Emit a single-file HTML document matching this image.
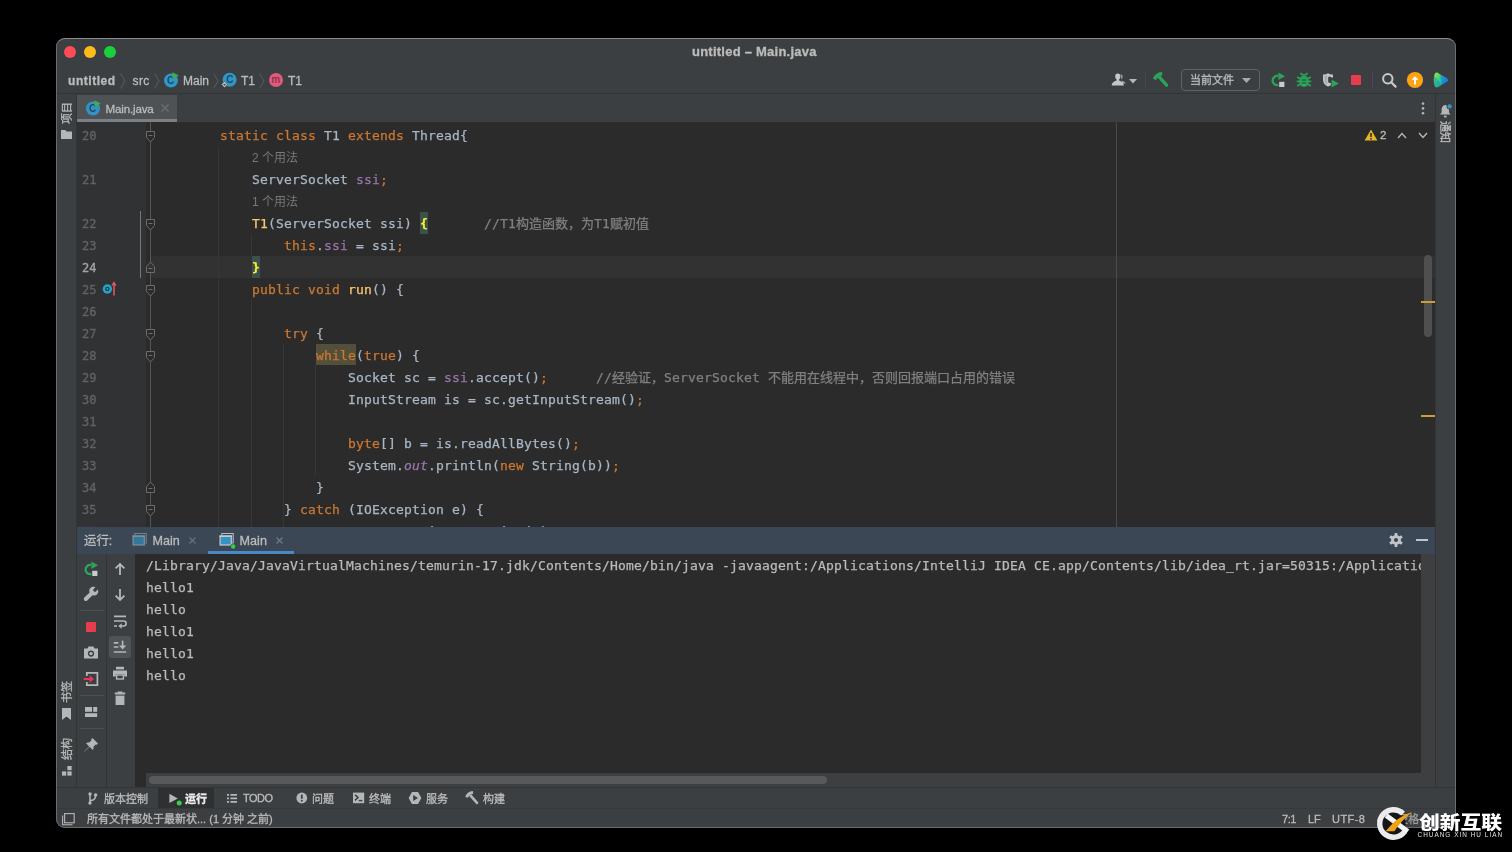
<!DOCTYPE html>
<html lang="zh-CN">
<head>
<meta charset="utf-8">
<title>untitled – Main.java</title>
<style>
html,body{margin:0;padding:0;background:#000;}
body{width:1512px;height:852px;overflow:hidden;position:relative;}
.a{position:absolute;}
#clip{position:absolute;left:56px;top:38px;width:1400px;height:790px;border-radius:9px;overflow:hidden;background:#3c3f41;}
#pg{position:absolute;left:-56px;top:-38px;width:1512px;height:852px;will-change:transform;}
#frame{position:absolute;left:56px;top:38px;width:1398px;height:788px;border-radius:9px;border:1px solid #696c6e;border-top-color:#8a8d8f;pointer-events:none;}
.ui{position:absolute;-webkit-text-stroke:0.3px;font-family:"Liberation Sans","Noto Sans CJK SC",sans-serif;font-size:12px;line-height:16px;color:#bbbbbb;white-space:nowrap;}
.ui11{font-size:11px;}
.b{font-weight:bold;}
.code{position:absolute;left:188px;height:22px;margin-top:1px;-webkit-text-stroke:0.25px;font-family:"DejaVu Sans Mono","Noto Sans CJK SC",monospace;font-size:13px;line-height:22px;letter-spacing:0.173px;color:#a9b7c6;white-space:pre;}
.code .z,.con .z{font-family:"Liberation Sans","Noto Sans CJK SC",sans-serif;letter-spacing:0;line-height:0;}
.k{color:#cc7832;}
.f{color:#9876aa;}
.c{color:#808080;}
.fn{color:#ffc66d;}
.it{font-style:italic;}
.hint{position:absolute;margin-top:1px;font-family:"Liberation Sans","Noto Sans CJK SC",sans-serif;font-size:12px;line-height:22px;height:22px;color:#787878;white-space:nowrap;}
.ln{position:absolute;margin-top:1px;-webkit-text-stroke:0.35px;left:82px;width:20px;height:22px;font-family:"DejaVu Sans Mono",monospace;font-size:12px;line-height:22px;color:#606366;white-space:pre;}
.con{position:absolute;left:146px;height:22px;margin-top:1px;-webkit-text-stroke:0.25px;font-family:"DejaVu Sans Mono","Noto Sans CJK SC",monospace;font-size:13px;line-height:22px;letter-spacing:0.173px;color:#bbbbbb;white-space:pre;}
.vt{position:absolute;-webkit-text-stroke:0.3px;font-family:"Liberation Sans","Noto Sans CJK SC",sans-serif;font-size:11px;line-height:12px;color:#bbbbbb;white-space:nowrap;transform-origin:0 0;}
svg{position:absolute;overflow:visible;}
</style>
</head>
<body>
<div id="clip"><div id="pg">

<!-- ===== title bar ===== -->
<div class="a" style="left:56px;top:38px;width:1400px;height:56px;background:#3c3f41;"></div>
<div class="a" style="left:64px;top:46px;width:12px;height:12px;border-radius:6px;background:#fc4c55;"></div>
<div class="a" style="left:84px;top:46px;width:12px;height:12px;border-radius:6px;background:#fdbc1c;"></div>
<div class="a" style="left:104px;top:46px;width:12px;height:12px;border-radius:6px;background:#1bcf3c;"></div>
<div class="ui b" id="t_title" style="left:692px;top:43.5px;font-size:13px;color:#bcbcbc;letter-spacing:0.24px;">untitled – Main.java</div>

<!-- ===== breadcrumbs ===== -->
<div class="ui b" id="t_bc1" style="left:68px;top:73px;letter-spacing:0.55px;">untitled</div>
<div class="ui" id="t_bc2" style="left:132.5px;top:73px;letter-spacing:0.4px;">src</div>
<div class="ui" id="t_bc3" style="left:183px;top:73px;">Main</div>
<div class="ui" id="t_bc4" style="left:241px;top:73px;">T1</div>
<div class="ui" id="t_bc5" style="left:288px;top:73px;">T1</div>
<svg style="left:119px;top:73px;" width="8" height="16" viewBox="0 0 8 16"><path d="M1.5 0.5 L6 8 L1.5 15.5" fill="none" stroke="#595c5e" stroke-width="1"/></svg>
<svg style="left:153px;top:73px;" width="8" height="16" viewBox="0 0 8 16"><path d="M1.5 0.5 L6 8 L1.5 15.5" fill="none" stroke="#595c5e" stroke-width="1"/></svg>
<svg style="left:212px;top:73px;" width="8" height="16" viewBox="0 0 8 16"><path d="M1.5 0.5 L6 8 L1.5 15.5" fill="none" stroke="#595c5e" stroke-width="1"/></svg>
<svg style="left:258px;top:73px;" width="8" height="16" viewBox="0 0 8 16"><path d="M1.5 0.5 L6 8 L1.5 15.5" fill="none" stroke="#595c5e" stroke-width="1"/></svg>

<!-- class icon (Main) -->
<svg style="left:163px;top:72px;" width="16" height="16" viewBox="0 0 16 16">
 <circle cx="8" cy="8.5" r="7" fill="#3295c4"/>
 <text x="7.6" y="12.1" font-family="Liberation Sans, sans-serif" font-size="10" font-weight="bold" text-anchor="middle" fill="#1b4a66">C</text>
 <path d="M9.5 0.2 L15.8 3.6 L9.5 7 Z" fill="#3fae4e"/>
</svg>
<!-- class icon static (T1) -->
<svg style="left:221px;top:72px;" width="16" height="16" viewBox="0 0 16 16">
 <circle cx="8.6" cy="7.8" r="7" fill="#3295c4"/>
 <text x="8.8" y="11.4" font-family="Liberation Sans, sans-serif" font-size="10" font-weight="bold" text-anchor="middle" fill="#1b4a66">C</text>
 <path d="M3.5 9.2 L6.8 12.5 L3.5 15.8 L0.2 12.5 Z" fill="#3c3f41"/>
 <path d="M3.5 10.4 L5.6 12.5 L3.5 14.6 L1.4 12.5 Z" fill="none" stroke="#b8bcbf" stroke-width="1.2"/>
</svg>
<!-- method icon -->
<svg style="left:268px;top:72px;" width="16" height="16" viewBox="0 0 16 16">
 <circle cx="8" cy="8" r="7" fill="#e05a7b"/>
 <text x="8" y="11" font-family="Liberation Sans, sans-serif" font-size="10" text-anchor="middle" fill="#6b2236">m</text>
</svg>

<!-- ===== top right toolbar ===== -->
<!-- user icon -->
<svg style="left:1111px;top:72px;" width="16" height="16" viewBox="0 0 16 16">
 <path d="M9.6 2.2 C11 2.2 11.6 3.2 11.6 4.6 C11.6 6 11 7.2 10.4 7.6 L10.4 8.4 C12.4 9.2 14.6 9.8 14.6 11.6 L11 11.6 Z" fill="#9a9da0"/>
 <path d="M6.8 1.4 C8.6 1.4 9.4 2.6 9.4 4.2 C9.4 5.8 8.8 7 8 7.6 L8 8.6 C10.2 9.6 12.8 10.2 12.8 13.6 L0.8 13.6 C0.8 10.2 3.4 9.6 5.6 8.6 L5.6 7.6 C4.8 7 4.2 5.8 4.2 4.2 C4.2 2.6 5 1.4 6.8 1.4 Z" fill="#c4c6c8"/>
</svg>
<svg style="left:1129px;top:79px;" width="8" height="5" viewBox="0 0 8 5"><path d="M0 0 L8 0 L4 4.5 Z" fill="#b4b6b8"/></svg>
<div class="a" style="left:1145px;top:71px;width:1px;height:18px;background:#474a4c;"></div>
<!-- hammer -->
<svg style="left:1153px;top:72px;" width="16" height="16" viewBox="0 0 16 16">
 <path d="M1.6 7.4 C2.6 4.6 5.6 2 9.2 1.6" fill="none" stroke="#2ba35a" stroke-width="3.6"/>
 <path d="M6.2 5 L13.6 13.2" fill="none" stroke="#2ba35a" stroke-width="3.3" stroke-linecap="round"/>
</svg>
<!-- combobox -->
<div class="a" style="left:1181px;top:69px;width:77px;height:20px;border:1px solid #5f6264;border-radius:4px;background:#3c3f41;"></div>
<div class="ui ui11" id="t_combo" style="left:1190px;top:72px;">当前文件</div>
<svg style="left:1242px;top:78px;" width="9" height="5" viewBox="0 0 9 5"><path d="M0 0 L9 0 L4.5 5 Z" fill="#a8aaac"/></svg>
<!-- rerun -->
<svg style="left:1270px;top:72px;" width="16" height="16" viewBox="0 0 16 16">
 <path d="M8.0 3.97 A4.6 4.6 0 1 0 8.39 12.94" fill="none" stroke="#2ba35a" stroke-width="2.4"/>
 <path d="M8.4 0.6 L15 4.3 L8.4 8 Z" fill="#2ba35a"/>
 <rect x="9.2" y="9.8" width="5.2" height="5.2" fill="#c9cbcd"/>
</svg>
<!-- bug -->
<svg style="left:1296px;top:72px;" width="16" height="16" viewBox="0 0 16 16">
 <ellipse cx="8" cy="9.2" rx="4.7" ry="5.7" fill="#2ba35a"/>
 <path d="M5.2 3.6 C5.2 1.4 10.8 1.4 10.8 3.6 Z" fill="#2ba35a"/>
 <path d="M1.2 5 L4.4 6.8 M14.8 5 L11.6 6.8 M0.8 9.4 L4 9.4 M15.2 9.4 L12 9.4 M1.2 14 L4.4 12 M14.8 14 L11.6 12 M4.6 1 L6 2.8 M11.4 1 L10 2.8" stroke="#2ba35a" stroke-width="1.8" fill="none"/>
 <path d="M5.6 8 L10.4 8 M5.6 10.8 L10.4 10.8" stroke="#1f6d3c" stroke-width="1.3"/>
</svg>
<!-- coverage -->
<svg style="left:1322px;top:72px;" width="17" height="16" viewBox="0 0 17 16">
 <path d="M1 2.6 C3.4 2.6 4.8 2 6 1.2 C7.2 2 8.6 2.6 11 2.6 L11 5.4 L9.2 5.4 C8.4 4.2 7 4.2 6.2 5.4 L6.2 10 C7 11.2 8.2 11.2 8.8 10.4 L8.8 13 C8 13.8 7 14.2 6 14.6 C3 13.4 1 11.2 1 7.4 Z" fill="#c4c6c8"/>
 <path d="M2.4 3.8 C3.8 3.7 4.8 3.3 5.2 3 L5.2 12.8 C3.4 11.6 2.4 10 2.4 7.4 Z" fill="#a9abad"/>
 <path d="M9.6 7.6 L16.8 11.6 L9.6 15.6 Z" fill="#2ba35a"/>
</svg>
<!-- stop -->
<div class="a" style="left:1351px;top:75px;width:10px;height:10px;background:#e63d4c;border-radius:1px;"></div>
<div class="a" style="left:1372px;top:71px;width:1px;height:18px;background:#474a4c;"></div>
<!-- search -->
<svg style="left:1381px;top:72px;" width="16" height="16" viewBox="0 0 16 16">
 <circle cx="6.8" cy="6.8" r="4.7" fill="none" stroke="#c6c8ca" stroke-width="2"/>
 <path d="M10.2 10.2 L14.6 14.6" stroke="#c6c8ca" stroke-width="2.2" stroke-linecap="round"/>
</svg>
<!-- update (orange) -->
<svg style="left:1407px;top:72px;" width="16" height="16" viewBox="0 0 16 16">
 <circle cx="8" cy="8" r="8.1" fill="#fca413"/>
 <path d="M8 4.2 L11.4 7.8 L9 7.8 L9 12.4 L7 12.4 L7 7.8 L4.6 7.8 Z" fill="#ffffff"/>
</svg>
<!-- colourful play -->
<svg style="left:1433px;top:72px;" width="16" height="16" viewBox="0 0 16 16">
 <defs>
  <linearGradient id="gp1" x1="0" y1="0" x2="1" y2="0.5"><stop offset="0" stop-color="#a6ea3c"/><stop offset="0.4" stop-color="#4ed27a"/><stop offset="0.7" stop-color="#1fb4c4"/><stop offset="1" stop-color="#1878e0"/></linearGradient>
 </defs>
 <path d="M2.2 1.2 C3 0.4 4 0.4 5 1 L14.2 6.4 C15.6 7.2 15.6 8.8 14.2 9.6 L5 15 C4 15.6 3 15.4 2.4 14.8 C1.4 13.6 0.8 11 0.8 8 C0.8 5 1.4 2.2 2.2 1.2 Z" fill="url(#gp1)"/>
 <path d="M2.4 14.8 C1.4 13.6 0.8 11 0.8 8 C0.8 6.4 1 5 1.2 4 L9 12.6 L5 15 C4 15.6 3 15.4 2.4 14.8 Z" fill="#10a39c" opacity="0.6"/>
 <path d="M7.2 2.2 L14.2 6.4 C15.6 7.2 15.6 8.8 14.2 9.6 L9 12.6 Z" fill="#1673d8" opacity="0.5"/>
</svg>

<!-- toolbar bottom border -->
<div class="a" style="left:56px;top:93px;width:1400px;height:1px;background:#323536;"></div>

<!-- ===== editor tab bar ===== -->
<div class="a" style="left:56px;top:94px;width:1400px;height:28px;background:#3c3f41;"></div>
<div class="a" style="left:77px;top:95px;width:100px;height:27px;background:#4e5254;"></div>
<div class="a" style="left:77px;top:119px;width:100px;height:3px;background:#7a8084;"></div>
<svg style="left:85px;top:100px;" width="16" height="16" viewBox="0 0 16 16">
 <circle cx="8" cy="8.5" r="7" fill="#3592c4"/>
 <text x="7.6" y="12.1" font-family="Liberation Sans, sans-serif" font-size="10" font-weight="bold" text-anchor="middle" fill="#1b4a66">C</text>
 <path d="M9.5 0.2 L15.8 3.6 L9.5 7 Z" fill="#3fae4e"/>
</svg>
<div class="ui" id="t_tab" style="left:105.5px;top:100.6px;font-size:11.6px;letter-spacing:-0.17px;">Main.java</div>
<svg style="left:161px;top:104px;" width="8" height="8" viewBox="0 0 8 8"><path d="M0.5 0.5 L7.5 7.5 M7.5 0.5 L0.5 7.5" stroke="#6f7375" stroke-width="1.1" fill="none"/></svg>
<svg style="left:1421px;top:102px;" width="4" height="13" viewBox="0 0 4 13"><circle cx="2" cy="1.6" r="1.3" fill="#b0b2b4"/><circle cx="2" cy="6.4" r="1.3" fill="#b0b2b4"/><circle cx="2" cy="11.2" r="1.3" fill="#b0b2b4"/></svg>
<!-- ===== editor ===== -->
<div class="a" id="ed" style="left:77px;top:122px;width:1358px;height:405px;background:#2b2b2b;overflow:hidden;">
<div class="a" style="left:-77px;top:-122px;width:1512px;height:852px;">
<div class="a" style="left:77px;top:122px;width:69px;height:405px;background:#303234;"></div>
<div class="a" style="left:151px;top:256px;width:1284px;height:22px;background:#323232;"></div>
<div class="a" style="left:1116px;top:122px;width:1px;height:405px;background:#4b4b4b;"></div>
<div class="a" style="left:218px;top:146px;width:1px;height:381px;background:#363636;"></div>
<div class="a" style="left:251px;top:234px;width:1px;height:22px;background:#363636;"></div>
<div class="a" style="left:251px;top:300px;width:1px;height:227px;background:#363636;"></div>
<div class="a" style="left:283px;top:344px;width:1px;height:183px;background:#363636;"></div>
<div class="a" style="left:315px;top:366px;width:1px;height:110px;background:#363636;"></div>
<div class="a" style="left:150px;top:122px;width:1px;height:405px;background:#555555;"></div>
<div class="a" style="left:140px;top:211px;width:1px;height:67px;background:#787878;"></div>
<div class="ln" style="top:124px;color:#606366;">20</div>
<div class="ln" style="top:168px;color:#606366;">21</div>
<div class="ln" style="top:212px;color:#606366;">22</div>
<div class="ln" style="top:234px;color:#606366;">23</div>
<div class="ln" style="top:256px;color:#a4a3a3;">24</div>
<div class="ln" style="top:278px;color:#606366;">25</div>
<div class="ln" style="top:300px;color:#606366;">26</div>
<div class="ln" style="top:322px;color:#606366;">27</div>
<div class="ln" style="top:344px;color:#606366;">28</div>
<div class="ln" style="top:366px;color:#606366;">29</div>
<div class="ln" style="top:388px;color:#606366;">30</div>
<div class="ln" style="top:410px;color:#606366;">31</div>
<div class="ln" style="top:432px;color:#606366;">32</div>
<div class="ln" style="top:454px;color:#606366;">33</div>
<div class="ln" style="top:476px;color:#606366;">34</div>
<div class="ln" style="top:498px;color:#606366;">35</div>
<div class="ln" style="top:520px;color:#606366;">36</div>
<svg style="left:146px;top:131px;" width="9" height="12" viewBox="0 0 9 12"><path d="M0.5 0.5 L8.5 0.5 L8.5 6.5 L4.5 11 L0.5 6.5 Z" fill="#2b2b2b" stroke="#6c6c6c" stroke-width="1"/><path d="M2.5 4.5 L6.5 4.5" stroke="#6c6c6c" stroke-width="1"/></svg>
<svg style="left:146px;top:219px;" width="9" height="12" viewBox="0 0 9 12"><path d="M0.5 0.5 L8.5 0.5 L8.5 6.5 L4.5 11 L0.5 6.5 Z" fill="#2b2b2b" stroke="#6c6c6c" stroke-width="1"/><path d="M2.5 4.5 L6.5 4.5" stroke="#6c6c6c" stroke-width="1"/></svg>
<svg style="left:146px;top:285px;" width="9" height="12" viewBox="0 0 9 12"><path d="M0.5 0.5 L8.5 0.5 L8.5 6.5 L4.5 11 L0.5 6.5 Z" fill="#2b2b2b" stroke="#6c6c6c" stroke-width="1"/><path d="M2.5 4.5 L6.5 4.5" stroke="#6c6c6c" stroke-width="1"/></svg>
<svg style="left:146px;top:329px;" width="9" height="12" viewBox="0 0 9 12"><path d="M0.5 0.5 L8.5 0.5 L8.5 6.5 L4.5 11 L0.5 6.5 Z" fill="#2b2b2b" stroke="#6c6c6c" stroke-width="1"/><path d="M2.5 4.5 L6.5 4.5" stroke="#6c6c6c" stroke-width="1"/></svg>
<svg style="left:146px;top:351px;" width="9" height="12" viewBox="0 0 9 12"><path d="M0.5 0.5 L8.5 0.5 L8.5 6.5 L4.5 11 L0.5 6.5 Z" fill="#2b2b2b" stroke="#6c6c6c" stroke-width="1"/><path d="M2.5 4.5 L6.5 4.5" stroke="#6c6c6c" stroke-width="1"/></svg>
<svg style="left:146px;top:505px;" width="9" height="12" viewBox="0 0 9 12"><path d="M0.5 0.5 L8.5 0.5 L8.5 6.5 L4.5 11 L0.5 6.5 Z" fill="#2b2b2b" stroke="#6c6c6c" stroke-width="1"/><path d="M2.5 4.5 L6.5 4.5" stroke="#6c6c6c" stroke-width="1"/></svg>
<svg style="left:146px;top:261px;" width="9" height="12" viewBox="0 0 9 12"><path d="M0.5 11.5 L8.5 11.5 L8.5 5.5 L4.5 1 L0.5 5.5 Z" fill="#323232" stroke="#6c6c6c" stroke-width="1"/><path d="M2.5 7.5 L6.5 7.5" stroke="#6c6c6c" stroke-width="1"/></svg>
<svg style="left:146px;top:481px;" width="9" height="12" viewBox="0 0 9 12"><path d="M0.5 11.5 L8.5 11.5 L8.5 5.5 L4.5 1 L0.5 5.5 Z" fill="#2b2b2b" stroke="#6c6c6c" stroke-width="1"/><path d="M2.5 7.5 L6.5 7.5" stroke="#6c6c6c" stroke-width="1"/></svg>
<svg style="left:102px;top:281px;" width="16" height="16" viewBox="0 0 16 16">
 <circle cx="5.4" cy="8" r="4.7" fill="#20a6cc"/>
 <circle cx="5.4" cy="8" r="2.2" fill="#313335"/>
 <circle cx="5.4" cy="8" r="1" fill="#20a6cc"/>
 <path d="M12 0.2 L14.8 4.6 L12.8 4.6 L12.8 14.6 L11.2 14.6 L11.2 4.6 L9.2 4.6 Z" fill="#e0555e"/>
</svg>
<div class="a" style="left:420px;top:212px;width:8px;height:22px;background:#3b514d;"></div>
<div class="a" style="left:252px;top:256px;width:8px;height:22px;background:#3b514d;"></div>
<div class="a" style="left:316px;top:344px;width:40px;height:21px;background:#52503a;"></div>
<div class="hint" id="t_h1" style="left:252px;top:146px;">2 个用法</div>
<div class="hint" id="t_h2" style="left:252px;top:190px;">1 个用法</div>
<div class="code" id="c20" style="top:124px;">    <span class="k">static class </span>T1 <span class="k">extends </span>Thread{</div>
<div class="code" id="c21" style="top:168px;">        ServerSocket <span class="f">ssi</span><span class="k">;</span></div>
<div class="code" id="c22" style="top:212px;">        <span class="fn">T1</span>(ServerSocket ssi) <b style="color:#ffef28">{</b>       <span class="c">//T1<span class="z">构造函数，为</span>T1<span class="z">赋初值</span></span></div>
<div class="code" id="c23" style="top:234px;">            <span class="k">this</span>.<span class="f">ssi</span> = ssi<span class="k">;</span></div>
<div class="code" id="c24" style="top:256px;">        <b style="color:#ffef28">}</b></div>
<div class="code" id="c25" style="top:278px;">        <span class="k">public void </span><span class="fn">run</span>() {</div>
<div class="code" id="c27" style="top:322px;">            <span class="k">try </span>{</div>
<div class="code" id="c28" style="top:344px;">                <span class="k">while</span>(<span class="k">true</span>) {</div>
<div class="code" id="c29" style="top:366px;">                    Socket sc = <span class="f">ssi</span>.accept()<span class="k">;</span>      <span class="c">//<span class="z">经验证，</span>ServerSocket <span class="z">不能用在线程中，否则回报端口占用的错误</span></span></div>
<div class="code" id="c30" style="top:388px;">                    InputStream is = sc.getInputStream()<span class="k">;</span></div>
<div class="code" id="c32" style="top:432px;">                    <span class="k">byte</span>[] b = is.readAllBytes()<span class="k">;</span></div>
<div class="code" id="c33" style="top:454px;">                    System.<span class="f it">out</span>.println(<span class="k">new </span>String(b))<span class="k">;</span></div>
<div class="code" id="c34" style="top:476px;">                }</div>
<div class="code" id="c35" style="top:498px;">            } <span class="k">catch </span>(IOException e) {</div>
<div class="code" id="c36" style="top:520px;">                <span class="k" style="position:relative;top:2px;">throw new </span>RuntimeException(e)<span class="k">;</span></div>
<svg style="left:1364px;top:129px;" width="14" height="12" viewBox="0 0 14 12"><path d="M7 0.4 L13.4 11.4 L0.6 11.4 Z" fill="#e2b428"/><path d="M7 4 L7 8" stroke="#2b2b2b" stroke-width="1.6"/><circle cx="7" cy="9.8" r="0.9" fill="#2b2b2b"/></svg>
<div class="ui" id="t_w2" style="left:1380px;top:127px;font-size:11.5px;">2</div>
<svg style="left:1397px;top:132px;" width="10" height="7" viewBox="0 0 10 7"><path d="M1 6 L5 1.6 L9 6" fill="none" stroke="#b4b6b8" stroke-width="1.4"/></svg>
<svg style="left:1418px;top:132px;" width="10" height="7" viewBox="0 0 10 7"><path d="M1 1 L5 5.4 L9 1" fill="none" stroke="#b4b6b8" stroke-width="1.4"/></svg>
<div class="a" style="left:1424px;top:255px;width:8px;height:82px;border-radius:4px;background:#4f4f4f;"></div>
<div class="a" style="left:1421px;top:301px;width:14px;height:2px;background:#c9a233;"></div>
<div class="a" style="left:1421px;top:415px;width:14px;height:2px;background:#c9a233;"></div>
</div></div>
<!-- ===== left tool strip ===== -->
<div class="a" style="left:56px;top:94px;width:21px;height:693px;background:#3c3f41;"></div>
<div class="a" style="left:76px;top:94px;width:1px;height:693px;background:#323536;"></div>
<div class="vt" id="t_proj" style="left:60.5px;top:124px;transform:rotate(-90deg);">项目</div>
<svg style="left:61px;top:130px;" width="11" height="9" viewBox="0 0 11 9"><path d="M0 0 L4.2 0 L5.6 1.6 L11 1.6 L11 9 L0 9 Z" fill="#b4b6b8"/></svg>
<div class="vt" id="t_bm" style="left:61px;top:703px;transform:rotate(-90deg);">书签</div>
<svg style="left:62px;top:708px;" width="9" height="12" viewBox="0 0 9 12"><path d="M0 0 L9 0 L9 12 L4.5 8.4 L0 12 Z" fill="#b4b6b8"/></svg>
<div class="vt" id="t_st" style="left:60.5px;top:760px;transform:rotate(-90deg);">结构</div>
<svg style="left:62px;top:766px;" width="10" height="10" viewBox="0 0 10 10"><rect x="5.4" y="0" width="4.2" height="4.2" fill="#b4b6b8"/><rect x="0" y="5.4" width="4.2" height="4.2" fill="#b4b6b8"/><rect x="5.4" y="5.4" width="4.2" height="4.2" fill="#b4b6b8"/></svg>

<!-- ===== right tool strip ===== -->
<div class="a" style="left:1435px;top:94px;width:21px;height:693px;background:#3c3f41;"></div>
<div class="a" style="left:1435px;top:94px;width:1px;height:693px;background:#323536;"></div>
<svg style="left:1439px;top:103px;" width="14" height="15" viewBox="0 0 14 15">
 <path d="M6.2 2 C3.6 2.4 2.6 4.6 2.6 7 L2.6 9.4 L1 11.6 L11.6 11.6 L10 9.4 L10 7 C10 4.6 8.8 2.4 6.2 2 Z" fill="#b4b6b8"/>
 <rect x="5" y="12.6" width="2.6" height="1.8" fill="#b4b6b8"/>
 <circle cx="10.6" cy="3.4" r="3" fill="#3c3f41"/>
 <circle cx="10.6" cy="3.4" r="2.2" fill="#3592c4"/>
</svg>
<div class="vt" id="t_nt" style="left:1451px;top:121px;transform:rotate(90deg);">通知</div>

<!-- ===== run panel ===== -->
<div class="a" style="left:77px;top:527px;width:1358px;height:27px;background:#3b4754;"></div>
<div class="ui" id="t_run" style="left:84px;top:533px;font-size:12.4px;">运行:</div>
<svg style="left:132px;top:532px;" width="16" height="15" viewBox="0 0 16 15">
 <path d="M2.8 3 L2.8 1.5 L14.2 1.5 L14.2 11 L13 11" fill="none" stroke="#6f8291" stroke-width="1.1"/>
 <rect x="1.1" y="4.1" width="11.2" height="8.9" fill="#33789c" stroke="#7d8f9d" stroke-width="1.2"/>
 <path d="M0.5 4.2 L12.9 4.2" stroke="#7d8f9d" stroke-width="1.6"/>
</svg>
<div class="ui" id="t_rt1" style="left:152.4px;top:533px;font-size:12.6px;">Main</div>
<svg style="left:188.8px;top:537px;" width="7" height="7" viewBox="0 0 7 7"><path d="M0.5 0.5 L6.5 6.5 M6.5 0.5 L0.5 6.5" stroke="#65737f" stroke-width="1.1" fill="none"/></svg>
<svg style="left:219.2px;top:532px;" width="16" height="16" viewBox="0 0 16 16">
 <path d="M2.8 3 L2.8 1.5 L14.2 1.5 L14.2 11 L13 11" fill="none" stroke="#b4bac0" stroke-width="1.1"/>
 <rect x="1.1" y="4.1" width="11.2" height="8.9" fill="#3592c4" stroke="#c6cbcf" stroke-width="1.2"/>
 <path d="M0.5 4.2 L12.9 4.2" stroke="#c6cbcf" stroke-width="1.6"/>
 <circle cx="14.2" cy="14.5" r="2.8" fill="#3b4754"/>
 <circle cx="14.2" cy="14.5" r="2.2" fill="#35d04a"/>
</svg>
<div class="ui" id="t_rt2" style="left:239.6px;top:533px;font-size:12.6px;">Main</div>
<svg style="left:276px;top:537px;" width="7" height="7" viewBox="0 0 7 7"><path d="M0.5 0.5 L6.5 6.5 M6.5 0.5 L0.5 6.5" stroke="#6f7d89" stroke-width="1.1" fill="none"/></svg>
<div class="a" style="left:208px;top:551px;width:86px;height:3px;background:#4a88c7;"></div>
<!-- gear -->
<svg style="left:1389px;top:533px;" width="14" height="14" viewBox="0 0 14 14">
 <g fill="#c0c4c8">
  <circle cx="7" cy="7" r="4.9"/>
  <rect x="5.6" y="0" width="2.8" height="14" rx="0.6"/>
  <rect x="5.6" y="0" width="2.8" height="14" rx="0.6" transform="rotate(60 7 7)"/>
  <rect x="5.6" y="0" width="2.8" height="14" rx="0.6" transform="rotate(120 7 7)"/>
 </g>
 <circle cx="7" cy="7" r="2.1" fill="#3b4754"/>
</svg>
<div class="a" style="left:1416px;top:539px;width:12px;height:2px;background:#c0c4c8;"></div>

<!-- run toolbars -->
<div class="a" style="left:77px;top:554px;width:58px;height:233px;background:#3c3f41;"></div>
<div class="a" style="left:106px;top:554px;width:1px;height:233px;background:#323536;"></div>
<!-- col1 -->
<svg style="left:83px;top:561px;" width="16" height="16" viewBox="0 0 16 16">
 <path d="M8.0 3.97 A4.6 4.6 0 1 0 8.39 12.94" fill="none" stroke="#2ba35a" stroke-width="2.4"/>
 <path d="M8.4 0.6 L15 4.3 L8.4 8 Z" fill="#2ba35a"/>
 <rect x="9.2" y="9.8" width="5.2" height="5.2" fill="#c9cbcd"/>
</svg>
<svg style="left:83px;top:586px;" width="16" height="16" viewBox="0 0 16 16">
 <path d="M14.8 3.6 L12 6.2 L9.8 4 L12.4 1.2 C10.6 0.4 8.6 0.8 7.4 2 C6.2 3.2 6 4.8 6.6 6.4 L1.4 11.6 C0.6 12.4 0.6 13.6 1.4 14.4 C2.2 15.2 3.4 15.2 4.2 14.4 L9.6 9.2 C11.2 9.8 12.8 9.6 14 8.4 C15.2 7.2 15.6 5.4 14.8 3.6 Z" fill="#b4b6b8"/>
</svg>
<div class="a" style="left:80px;top:610px;width:24px;height:1px;background:#4c4f51;"></div>
<div class="a" style="left:86px;top:622px;width:10px;height:10px;background:#e63d4c;border-radius:1px;"></div>
<svg style="left:83px;top:645px;" width="16" height="16" viewBox="0 0 16 16">
 <path d="M1 3.6 L4.4 3.6 L5.6 1.6 L10.4 1.6 L11.6 3.6 L15 3.6 L15 13.6 L1 13.6 Z" fill="#b4b6b8"/>
 <circle cx="8" cy="8.6" r="3.1" fill="#3c3f41"/>
 <circle cx="8" cy="8.6" r="1.7" fill="#b4b6b8"/>
</svg>
<svg style="left:83px;top:671px;" width="16" height="16" viewBox="0 0 16 16">
 <path d="M3.8 5 L3.8 1.8 L14.4 1.8 L14.4 14.2 L3.8 14.2 L3.8 11" fill="none" stroke="#b4b6b8" stroke-width="1.7"/>
 <path d="M0.6 7 L6.6 7 L6.6 4.2 L11 8 L6.6 11.8 L6.6 9 L0.6 9 Z" fill="#e8355a"/>
</svg>
<div class="a" style="left:80px;top:695px;width:24px;height:1px;background:#4c4f51;"></div>
<svg style="left:85px;top:707px;" width="12" height="10" viewBox="0 0 12 10">
 <rect x="0" y="0" width="7" height="4.8" fill="#b4b6b8"/><rect x="8.2" y="0" width="4" height="4.8" fill="#b4b6b8"/><rect x="0" y="6.2" width="12.2" height="3.8" fill="#b4b6b8"/>
</svg>
<div class="a" style="left:80px;top:728px;width:24px;height:1px;background:#4c4f51;"></div>
<svg style="left:83px;top:737px;" width="16" height="16" viewBox="0 0 16 16">
 <path d="M9.4 1 L15 6.6 L13.8 7.8 L12.8 7.4 L10.4 9.8 C10.8 11 10.6 12.2 9.8 13 L6.6 9.8 L1.4 14.8 L1.2 14.6 L6.2 9.4 L3 6.2 C3.8 5.4 5 5.2 6.2 5.6 L8.6 3.2 L8.2 2.2 Z" fill="#b4b6b8"/>
</svg>
<!-- col2 -->
<svg style="left:112px;top:561px;" width="16" height="16" viewBox="0 0 16 16"><path d="M8 14 L8 3.2 M3.6 7.4 L8 3 L12.4 7.4" fill="none" stroke="#b4b6b8" stroke-width="1.8"/></svg>
<svg style="left:112px;top:587px;" width="16" height="16" viewBox="0 0 16 16"><path d="M8 2 L8 12.8 M3.6 8.6 L8 13 L12.4 8.6" fill="none" stroke="#b4b6b8" stroke-width="1.8"/></svg>
<svg style="left:112px;top:614px;" width="16" height="16" viewBox="0 0 16 16">
 <path d="M2 2.4 L14 2.4 M2 7 L11.6 7 C15 7 15 12 11.6 12 L7.6 12 M2 12 L5 12" fill="none" stroke="#b4b6b8" stroke-width="1.6"/>
 <path d="M9.6 9.2 L6.4 12 L9.6 14.8 Z" fill="#b4b6b8"/>
</svg>
<div class="a" style="left:109px;top:636px;width:22px;height:22px;border-radius:3px;background:#4f5355;"></div>
<svg style="left:112px;top:639px;" width="16" height="16" viewBox="0 0 16 16">
 <path d="M1.8 3.8 L6.4 3.8 M1.8 8 L6.4 8 M1.8 13 L14.2 13" fill="none" stroke="#b4b6b8" stroke-width="1.7"/>
 <path d="M10.6 1.6 L10.6 8" fill="none" stroke="#b4b6b8" stroke-width="1.7"/>
 <path d="M7 6.4 L14.2 6.4 L10.6 10.4 Z" fill="#b4b6b8"/>
</svg>
<svg style="left:112px;top:665px;" width="16" height="16" viewBox="0 0 16 16">
 <rect x="4" y="1.8" width="8" height="2.6" fill="#b4b6b8"/>
 <path d="M1 5.6 L15 5.6 L15 11.6 L12.2 11.6 L12.2 9 L3.8 9 L3.8 11.6 L1 11.6 Z" fill="#b4b6b8"/>
 <rect x="4.6" y="10" width="6.8" height="4" fill="none" stroke="#b4b6b8" stroke-width="1.4"/>
</svg>
<svg style="left:112px;top:690px;" width="16" height="16" viewBox="0 0 16 16">
 <path d="M5.6 1.4 L10.4 1.4 L10.4 2.6 L13.2 2.6 L13.2 4.4 L2.8 4.4 L2.8 2.6 L5.6 2.6 Z" fill="#b4b6b8"/>
 <path d="M3.6 5.6 L12.4 5.6 L12.4 15 L3.6 15 Z" fill="#b4b6b8"/>
</svg>

<!-- console -->
<div class="a" id="cons" style="left:135px;top:554px;width:1286px;height:233px;background:#2b2b2b;overflow:hidden;">
<div class="a" style="left:-135px;top:-554px;width:1512px;height:852px;">
<div class="con" id="k1" style="top:554px;">/Library/Java/JavaVirtualMachines/temurin-17.jdk/Contents/Home/bin/java -javaagent:/Applications/IntelliJ IDEA CE.app/Contents/lib/idea_rt.jar=50315:/Applications/IntelliJ IDEA CE.app/Contents/bin -Dfile.encoding=UTF-8</div>
<div class="con" id="k2" style="top:576px;">hello1</div>
<div class="con" style="top:598px;">hello</div>
<div class="con" style="top:620px;">hello1</div>
<div class="con" style="top:642px;">hello1</div>
<div class="con" style="top:664px;">hello</div>
<div class="a" style="left:146px;top:773px;width:1275px;height:14px;background:#3d3f41;"></div>
<div class="a" style="left:149px;top:776px;width:678px;height:8px;border-radius:4px;background:#58595b;"></div>
</div></div>
<div class="a" style="left:1421px;top:554px;width:14px;height:233px;background:#3d3f41;"></div>

<!-- ===== bottom tool strip ===== -->
<div class="a" style="left:56px;top:788px;width:1400px;height:20px;background:#3c3f41;"></div>
<div class="a" style="left:56px;top:787px;width:1400px;height:1px;background:#323536;"></div>
<div class="a" style="left:158px;top:788px;width:56px;height:20px;background:#2e3032;"></div>
<!-- vcs -->
<svg style="left:88px;top:792px;" width="10" height="13" viewBox="0 0 10 13">
 <path d="M2 2 L2 11 M2 8.6 C6.6 8.6 7.6 6.6 7.6 3.6" fill="none" stroke="#b4b6b8" stroke-width="1.5"/>
 <circle cx="2" cy="2" r="1.7" fill="#b4b6b8"/><circle cx="7.6" cy="3" r="1.7" fill="#b4b6b8"/><circle cx="2" cy="11" r="1.7" fill="#b4b6b8"/>
</svg>
<div class="ui ui11" id="t_b1" style="left:104px;top:791px;">版本控制</div>
<svg style="left:169px;top:793px;" width="13" height="13" viewBox="0 0 13 13">
 <path d="M0.4 0.8 L8.8 5.4 L0.4 10 Z" fill="#b4b6b8"/>
 <circle cx="10.2" cy="10" r="3.2" fill="#2d2f30"/>
 <circle cx="10.2" cy="10" r="2.5" fill="#35d04a"/>
</svg>
<div class="ui ui11 b" id="t_b2" style="left:185px;top:791px;color:#ededed;">运行</div>
<svg style="left:227px;top:794px;" width="10" height="9" viewBox="0 0 10 9">
 <path d="M0 0.9 L2 0.9 M0 4.4 L2 4.4 M0 7.9 L2 7.9 M3.4 0.9 L10 0.9 M3.4 4.4 L10 4.4 M3.4 7.9 L10 7.9" stroke="#b4b6b8" stroke-width="1.7" fill="none"/>
</svg>
<div class="ui ui11" id="t_b3" style="left:243px;top:790px;letter-spacing:-0.5px;">TODO</div>
<svg style="left:296px;top:792px;" width="12" height="12" viewBox="0 0 12 12">
 <circle cx="5.8" cy="6" r="5.4" fill="#b4b6b8"/>
 <path d="M5.8 2.6 L5.8 6.8" stroke="#3c3f41" stroke-width="1.8"/><circle cx="5.8" cy="8.8" r="1" fill="#3c3f41"/>
</svg>
<div class="ui ui11" id="t_b4" style="left:312px;top:791px;">问题</div>
<svg style="left:353px;top:792px;" width="12" height="12" viewBox="0 0 12 12">
 <rect x="0" y="0.6" width="11.2" height="10.6" fill="#b4b6b8"/>
 <path d="M2 2.8 L5 5.6 L2 8.4" fill="none" stroke="#3c3f41" stroke-width="1.5"/><path d="M5.8 8.6 L9.4 8.6" stroke="#3c3f41" stroke-width="1.4"/>
</svg>
<div class="ui ui11" id="t_b5" style="left:369px;top:791px;">终端</div>
<svg style="left:408px;top:791px;" width="14" height="14" viewBox="0 0 14 14">
 <path d="M4 1 L10 1 L13.4 7 L10 13 L4 13 L0.6 7 Z" fill="#b4b6b8"/>
 <path d="M5.2 4 L10 7 L5.2 10 Z" fill="#3c3f41"/>
</svg>
<div class="ui ui11" id="t_b6" style="left:426px;top:791px;">服务</div>
<svg style="left:465px;top:791px;" width="14" height="14" viewBox="0 0 14 14">
 <path d="M1.6 6.4 C2.4 4 5 1.8 8 1.6" fill="none" stroke="#b4b6b8" stroke-width="3"/>
 <path d="M5.6 4.6 L12 11.8" fill="none" stroke="#b4b6b8" stroke-width="2.6" stroke-linecap="round"/>
</svg>
<div class="ui ui11" id="t_b7" style="left:483px;top:791px;">构建</div>

<!-- ===== status bar ===== -->
<div class="a" style="left:56px;top:808px;width:1400px;height:1px;background:#36393b;"></div>
<div class="a" style="left:56px;top:809px;width:1400px;height:19px;background:#3c3f41;"></div>
<svg style="left:62px;top:813px;" width="13" height="13" viewBox="0 0 13 13">
 <rect x="2.6" y="0.6" width="9.6" height="9.2" fill="none" stroke="#b4b6b8" stroke-width="1.1"/>
 <path d="M0.6 2.4 L0.6 11.8 L10.4 11.8" fill="none" stroke="#b4b6b8" stroke-width="1.1"/>
</svg>
<div class="ui ui11" id="t_s1" style="left:87px;top:811px;">所有文件都处于最新状... (1 分钟 之前)</div>
<div class="ui ui11" id="t_s2" style="left:1282px;top:811px;letter-spacing:-0.4px;">7:1</div>
<div class="ui ui11" id="t_s3" style="left:1308px;top:811px;">LF</div>
<div class="ui ui11" id="t_s4" style="left:1332px;top:811px;letter-spacing:0.45px;">UTF-8</div>
<div class="ui ui11" id="t_s5" style="left:1377px;top:811px;color:#9a9c9e;">4 个空格</div>

</div></div>
<div id="frame"></div>

<!-- ===== watermark ===== -->
<svg style="left:1376px;top:806px;" width="40" height="36" viewBox="0 0 40 36">
 <circle cx="17.5" cy="17.5" r="12" fill="#15161c"/>
 <path d="M27.09 7.57 A13.8 13.8 0 1 0 28.59 25.71" fill="none" stroke="#ebebeb" stroke-width="5.4"/>
 <path d="M10.2 9.6 L31.8 25.4" fill="none" stroke="#f4f4f4" stroke-width="5"/>
 <path d="M9.6 25.2 L18.4 25.2 C23 18.6 28 12.4 36 6.2 C27 9 20.6 13.4 16.6 17.4 Z" fill="#f0a312"/>
</svg>
<div class="ui" id="t_wm1" style="left:1418.5px;top:809.5px;font-size:17.7px;line-height:26px;font-weight:900;color:#ffffff;font-family:'Liberation Sans','Noto Sans CJK SC',sans-serif;-webkit-text-stroke:0;transform-origin:0 0;transform:scaleX(1.175);">创新互联</div>
<div class="ui" id="t_wm2" style="left:1417.5px;top:830px;font-size:6.4px;line-height:10px;color:#e4e4e4;letter-spacing:1.03px;-webkit-text-stroke:0;">CHUANG XIN HU LIAN</div>
</body>
</html>
